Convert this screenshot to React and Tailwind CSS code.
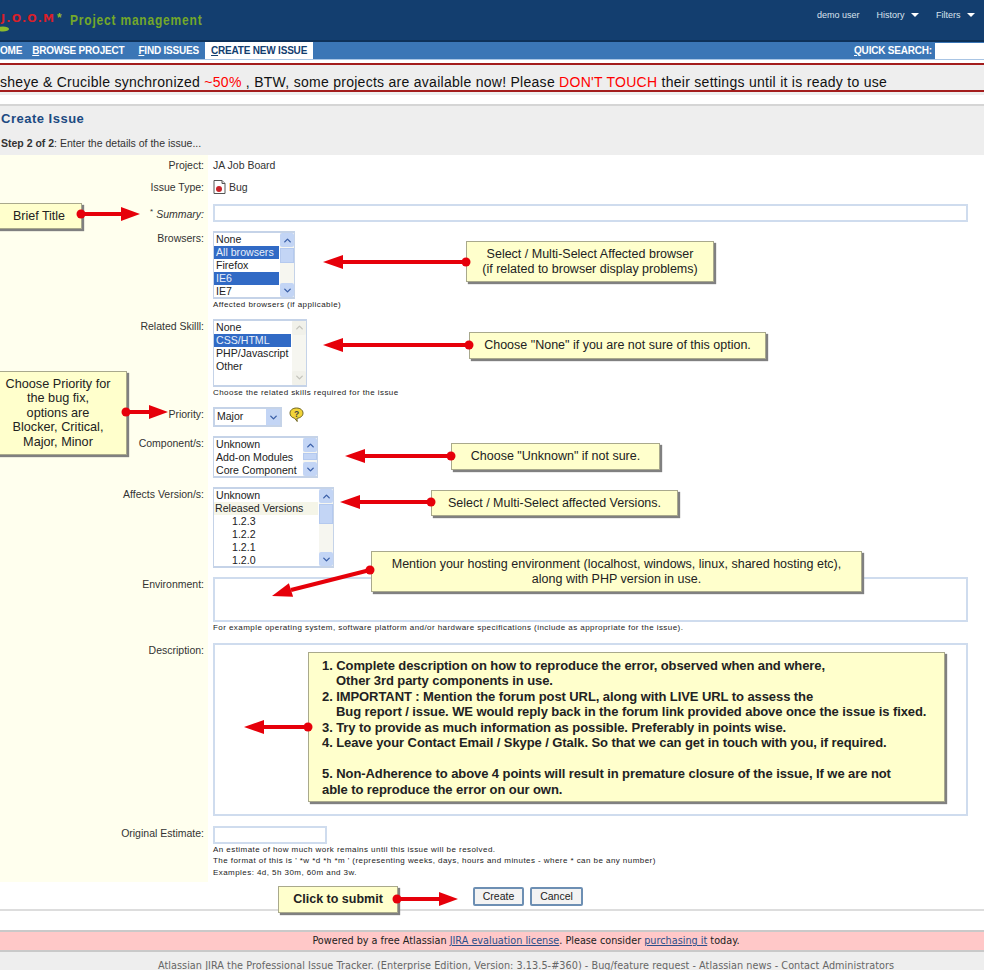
import { ChevronUp, ChevronDown } from "lucide-react";

const sans = "font-['Liberation_Sans',Arial,sans-serif]";

function Scrollbar({ thumbTop = 0, thumbHeight = 20, disabled = false }) {
  const btn = disabled
    ? "bg-[#f1f1ea] text-[#c4c4bc]"
    : "bg-[#c3d5f5] text-[#3a5fa8]";
  return (
    <div className="w-[14px] ml-[1px] h-full flex flex-col bg-[#f6f6f0] shrink-0">
      <div className={`h-[14px] flex items-center justify-center rounded-[2px] ${btn}`}>
        <ChevronUp size={11} strokeWidth={3} />
      </div>
      <div className="flex-1 min-h-0">
        {!disabled && (
          <div className="bg-[#c3d5f5] border border-[#b4c9ef]" style={{ marginTop: thumbTop, height: thumbHeight }} />
        )}
      </div>
      <div className={`h-[14px] flex items-center justify-center rounded-[2px] ${btn}`}>
        <ChevronDown size={11} strokeWidth={3} />
      </div>
    </div>
  );
}

function ListBox({ width, height, items, thumbTop, thumbHeight, disabled }) {
  return (
    <div
      className="bg-white border-x border-y-2 border-[#c5d3e8] flex overflow-hidden"
      style={{ width, height }}
    >
      <div className="flex-1 min-w-0 overflow-hidden">
        {items.map((item) => (
          <div
            key={item.text}
            className={`h-[13px] leading-[13px] text-[10.600px] whitespace-nowrap ${item.selected ? "bg-[#316ac5] text-[#e8effa]" : "text-[#222]"} ${item.group ? "bg-[#f5f5e8] pl-[1px]" : "pl-[2px]"}`}
            style={item.indent ? { paddingLeft: 18 } : undefined}
          >
            {item.text}
          </div>
        ))}
      </div>
      <Scrollbar thumbTop={thumbTop} thumbHeight={thumbHeight} disabled={disabled} />
    </div>
  );
}

function Row({ label, top, children, labelTop = 0 }) {
  return (
    <div className="flex">
      <div className="w-[208px] shrink-0 bg-[#ffffee] text-right pr-[4px] text-[10.500px] leading-[15px] text-[#333]" style={{ paddingTop: top + labelTop }}>
        {label}
      </div>
      <div className="flex-1 pl-[5px] pr-[16px]" style={{ paddingTop: top }}>
        {children}
      </div>
    </div>
  );
}

function Hint({ children }) {
  return <div className="text-[8px] leading-[11.500px] tracking-[0.44px] text-[#222] whitespace-nowrap">{children}</div>;
}

function Note({ className, children }) {
  return (
    <div className={`absolute bg-[#ffffcc] border border-[#a9a98c] shadow-[2px_2px_1px_#808080] text-[#222] flex items-center justify-center text-center ${className}`}>
      {children}
    </div>
  );
}

function Arrows() {
  const arrows = [
    [81, 214, 121, 214, 140, 214],
    [466, 262, 343, 262, 323, 262],
    [469, 345, 343, 345, 323, 345],
    [126, 412, 149, 412, 168, 412],
    [451, 456, 365, 456, 345, 456],
    [431, 502, 360, 502, 340, 502],
    [370, 570, 291, 590, 272, 596],
    [308, 727, 264, 727, 244, 727],
    [397, 899, 439, 899, 458, 899],
  ];
  return (
    <svg className="absolute left-0 top-0" width="984" height="970" fill="none">
      {arrows.map(([x1, y1, x2, y2, tx, ty]) => {
        const dx = tx - x2;
        const dy = ty - y2;
        const len = Math.hypot(dx, dy);
        const nx = (-dy / len) * 7;
        const ny = (dx / len) * 7;
        return (
          <g key={`${x1}-${y1}`}>
            <line x1={x1} y1={y1} x2={x2} y2={y2} stroke="#e6000a" strokeWidth="4" />
            <circle cx={x1} cy={y1} r="4.500" fill="#e6000a" />
            <polygon points={`${tx},${ty} ${x2 + nx},${y2 + ny} ${x2 - nx},${y2 - ny}`} fill="#e6000a" />
          </g>
        );
      })}
    </svg>
  );
}

function BugIcon() {
  return (
    <svg width="13" height="14" viewBox="0 0 13 14">
      <path d="M1 .5h8l3 3v10H1z" fill="#fff" stroke="#555" />
      <path d="M9 .5v3h3" fill="#ddd" stroke="#555" />
      <circle cx="6" cy="9" r="3" fill="#c8242a" />
    </svg>
  );
}

function HelpIcon() {
  return (
    <svg width="15" height="16" viewBox="0 0 15 16">
      <path d="M7.500 1C3.600 1 1 3.200 1 6.200c0 2.600 2 4.600 4.600 5l2.600 3.300-.3-3.200C11.300 11 14 9 14 6.200 14 3.200 11.400 1 7.500 1z" fill="#f2d438" stroke="#6e6420" />
      <text x="7.500" y="9.500" textAnchor="middle" fontSize="8.500" fontWeight="700" fill="#444" fontFamily="Liberation Sans">?</text>
    </svg>
  );
}

function Caret() {
  return <span className="inline-block ml-[4px] align-middle border-x-[4px] border-x-transparent border-t-[4px] border-t-white" />;
}

function NavItem({ first, rest, active, className = "" }) {
  return (
    <div className={`h-[17px] leading-[17px] px-[6px] ${active ? "bg-white text-[#133e6f]" : "text-white"} ${className}`}>
      <span className="underline">{first}</span>{rest}
    </div>
  );
}

const browsers = [
  { text: "None" },
  { text: "All browsers", selected: true },
  { text: "Firefox" },
  { text: "IE6", selected: true },
  { text: "IE7" },
];

const skills = [
  { text: "None" },
  { text: "CSS/HTML", selected: true },
  { text: "PHP/Javascript" },
  { text: "Other" },
];

const components = [
  { text: "Unknown" },
  { text: "Add-on Modules" },
  { text: "Core Component" },
];

const versions = [
  { text: "Unknown" },
  { text: "Released Versions", group: true },
  { text: "1.2.3", indent: true },
  { text: "1.2.2", indent: true },
  { text: "1.2.1", indent: true },
  { text: "1.2.0", indent: true },
];

export default function App() {
  return (
    <div className={`relative w-[984px] h-[970px] overflow-hidden bg-white ${sans}`}>
      {/* top bar */}
      <div className="h-[42px] bg-[#133e6f] border-b-2 border-[#0e3159] flex items-center justify-between pr-[9px]">
        <div className="flex items-center">
          <div className="relative w-[68px] h-[30px]">
            <span className="absolute left-[1px] top-[7px] text-[11px] leading-[14px] font-bold tracking-[1.200px] text-[#d8202a] font-['DejaVu_Sans',sans-serif] whitespace-nowrap">J.O.O.M</span>
            <span className="absolute left-[57px] top-[6px] text-[12px] leading-[14px] font-bold text-[#8dbb2d]">*</span>
            <svg className="absolute left-0 top-[20px]" width="12" height="8" viewBox="0 0 12 8">
              <ellipse cx="3" cy="4" rx="6" ry="2.500" fill="#8dbb2d" />
            </svg>
          </div>
          <span className="ml-[2px] text-[12px] font-bold tracking-[0.800px] scale-y-[1.25] text-[#74a82a] whitespace-nowrap">Project management</span>
        </div>
        <div className="flex items-center gap-[17px] text-[9px] text-[#d9e3ee] pb-[9px]">
          <span>demo user</span>
          <span>History <Caret /></span>
          <span>Filters <Caret /></span>
        </div>
      </div>

      {/* nav */}
      <div className="h-[18px] bg-[#3b76b6] border-b border-[#a9c5e4] flex items-center justify-between text-[10px] font-bold tracking-[-0.2px]">
        <div className="flex items-center">
          <div className="h-[17px] leading-[17px] text-white pr-[6px]">OME</div>
          <NavItem first="B" rest="ROWSE PROJECT" className="ml-[-2px]" />
          <NavItem first="F" rest="IND ISSUES" className="ml-[2px]" />
          <NavItem first="C" rest="REATE NEW ISSUE" active />
        </div>
        <div className="flex items-center gap-[3px] text-white">
          <span><span className="underline">Q</span>UICK SEARCH:</span>
          <div className="w-[49px] h-[16px] bg-white" />
        </div>
      </div>

      {/* announcement */}
      <div className="mt-[3px] h-[29px] bg-[#eeeeee] border-y-2 border-[#a31d1d] text-[14px] leading-[18px] pt-[8px] text-[#111] whitespace-nowrap tracking-[0.275px]">
        sheye &amp; Crucible synchronized <span className="text-[#f00]">~50%</span> , BTW, some projects are available now! Please <span className="text-[#f00]">DON'T TOUCH</span> their settings until it is ready to use
      </div>
      <div className="h-[3px] bg-[#eeeeee]" />

      {/* title */}
      <div className="mt-[9px] h-[51px] bg-[#eeeeee] border-t-2 border-[#d5d5d5] pl-[1px]">
        <div className="pt-[5px] text-[13px] font-bold tracking-[0.5px] leading-[16px] text-[#1c4a82]">Create Issue</div>
        <div className="pt-[10px] text-[10.500px] leading-[12px] text-[#333]"><b>Step 2 of 2</b>: Enter the details of the issue...</div>
      </div>

      {/* form */}
      <div className="h-[727px] bg-[linear-gradient(to_right,#ffffee_208px,#ffffff_208px)]">
        <Row label="Project:" top={3}>
          <div className="text-[10.500px] leading-[15px] text-[#333]">JA Job Board</div>
        </Row>
        <Row label="Issue Type:" top={7}>
          <div className="flex items-center gap-[3px] text-[10.500px] leading-[14px] text-[#333]"><BugIcon />Bug</div>
        </Row>
        <Row label={<><span className="align-super text-[8px] leading-[0]">*</span> <i>Summary:</i></>} top={9} labelTop={3}>
          <div className="w-[755px] h-[18px] border-2 border-[#cfdcee] bg-white" />
        </Row>
        <Row label="Browsers:" top={9}>
          <ListBox width={82} height={68} items={browsers} thumbTop={1} thumbHeight={15} />
          <Hint>Affected browsers (if applicable)</Hint>
        </Row>
        <Row label="Related Skilll:" top={8}>
          <ListBox width={94} height={68} items={skills} disabled />
          <Hint>Choose the related skills required for the issue</Hint>
        </Row>
        <Row label="Priority:" top={9}>
          <div className="flex items-start gap-[7px]">
            <div className="w-[69px] h-[20px] border-2 border-[#c5d3e8] flex items-center pl-[2px] text-[10.500px] text-[#222]">
              <span className="flex-1">Major</span>
              <div className="w-[14px] h-full bg-[#c3d5f5] text-[#3a5fa8] flex items-center justify-center"><ChevronDown size={11} strokeWidth={3} /></div>
            </div>
            <HelpIcon />
          </div>
        </Row>
        <Row label="Component/s:" top={9}>
          <ListBox width={105} height={42} items={components} thumbTop={1} thumbHeight={7} />
        </Row>
        <Row label="Affects Version/s:" top={9}>
          <ListBox width={121} height={81} items={versions} thumbTop={1} thumbHeight={20} />
        </Row>
        <Row label="Environment:" top={9}>
          <div className="w-[755px] h-[45px] border-2 border-[#cfdcee] bg-white" />
          <Hint>For example operating system, software platform and/or hardware specifications (include as appropriate for the issue).</Hint>
        </Row>
        <Row label="Description:" top={9}>
          <div className="w-[755px] h-[173px] border-2 border-[#cfdcee] bg-white" />
        </Row>
        <Row label="Original Estimate:" top={10}>
          <div className="w-[114px] h-[18px] border-2 border-[#cfdcee] bg-white" />
          <Hint>An estimate of how much work remains until this issue will be resolved.</Hint>
          <Hint>The format of this is ' *w *d *h *m ' (representing weeks, days, hours and minutes - where * can be any number)</Hint>
          <Hint>Examples: 4d, 5h 30m, 60m and 3w.</Hint>
        </Row>
      </div>

      {/* buttons */}
      <div className="h-[29px] border-b-2 border-[#dddddd] pl-[473px] pt-[5px] flex gap-[6px] items-start">
        <button className="w-[51px] h-[19px] rounded-[2px] border-2 border-[#6d8fb3] bg-[#f3f3f3] text-[10.500px] text-[#222]">Create</button>
        <button className="w-[53px] h-[19px] rounded-[2px] border-2 border-[#6d8fb3] bg-[#f3f3f3] text-[10.500px] text-[#222]">Cancel</button>
      </div>

      {/* footer */}
      <div className="mt-[19px] h-[22px] bg-[#ffc8c8] border-y-2 border-[#c9c9c9] pl-[68px] text-center text-[9.700px] leading-[18px] text-[#222] font-['DejaVu_Sans',sans-serif]">
        Powered by a free Atlassian <span className="underline text-[#2c4f8a]">JIRA evaluation license</span>. Please consider <span className="underline text-[#2c4f8a]">purchasing it</span> today.
      </div>
      <div className="h-[18px] bg-[#eeeeee] pl-[68px] pt-[9px] text-center text-[9.700px] leading-[9px] tracking-[0.04px] text-[#666] whitespace-nowrap font-['DejaVu_Sans',sans-serif]">
        Atlassian JIRA the Professional Issue Tracker. (Enterprise Edition, Version: 3.13.5-#360) - Bug/feature request - Atlassian news - Contact Administrators
      </div>

      {/* annotations over the form */}
      <Note className="left-[-4px] top-[203px] w-[86px] h-[26px] text-[12.500px]">Brief Title</Note>
      <Note className="left-[466px] top-[241px] w-[248px] h-[41px] pt-[1px] text-[12.500px] leading-[15px]">Select / Multi-Select Affected browser<br />(if related to browser display problems)</Note>
      <Note className="left-[469px] top-[332px] w-[297px] h-[27px] text-[12.500px]">Choose "None" if you are not sure of this option.</Note>
      <Note className="left-[-11px] top-[371px] w-[138px] h-[84px] text-[12.700px] leading-[14.500px]">Choose Priority for<br />the bug fix,<br />options are<br />Blocker, Critical,<br />Major, Minor</Note>
      <Note className="left-[451px] top-[443px] w-[209px] h-[27px] text-[12.500px]">Choose "Unknown" if not sure.</Note>
      <Note className="left-[431px] top-[490px] w-[247px] h-[26px] text-[12.500px]">Select / Multi-Select affected Versions.</Note>
      <Note className="left-[371px] top-[551px] w-[491px] h-[41px] pt-[1px] text-[12.500px] leading-[15px]">Mention your hosting environment (localhost, windows, linux, shared hosting etc),<br />along with PHP version in use.</Note>
      <Note className="left-[308px] top-[652px] w-[637px] h-[150px] !justify-start !text-left pl-[13px] pt-[1px] text-[13px] font-bold leading-[15.500px] tracking-[-0.08px]">
        <div className="whitespace-nowrap">
          1. Complete description on how to reproduce the error, observed when and where,<br />
          <span className="pl-[14px]">Other 3rd party components in use.</span><br />
          2. IMPORTANT : Mention the forum post URL, along with LIVE URL to assess the<br />
          <span className="pl-[14px]">Bug report / issue. WE would reply back in the forum link provided above once the issue is fixed.</span><br />
          3. Try to provide as much information as possible. Preferably in points wise.<br />
          4. Leave your Contact Email / Skype / Gtalk. So that we can get in touch with you, if required.<br />
          <br />
          5. Non-Adherence to above 4 points will result in premature closure of the issue, If we are not<br />
          able to reproduce the error on our own.
        </div>
      </Note>
      <Note className="left-[278px] top-[886px] w-[120px] h-[27px] text-[12.500px] font-bold">Click to submit</Note>
      <Arrows />
    </div>
  );
}
